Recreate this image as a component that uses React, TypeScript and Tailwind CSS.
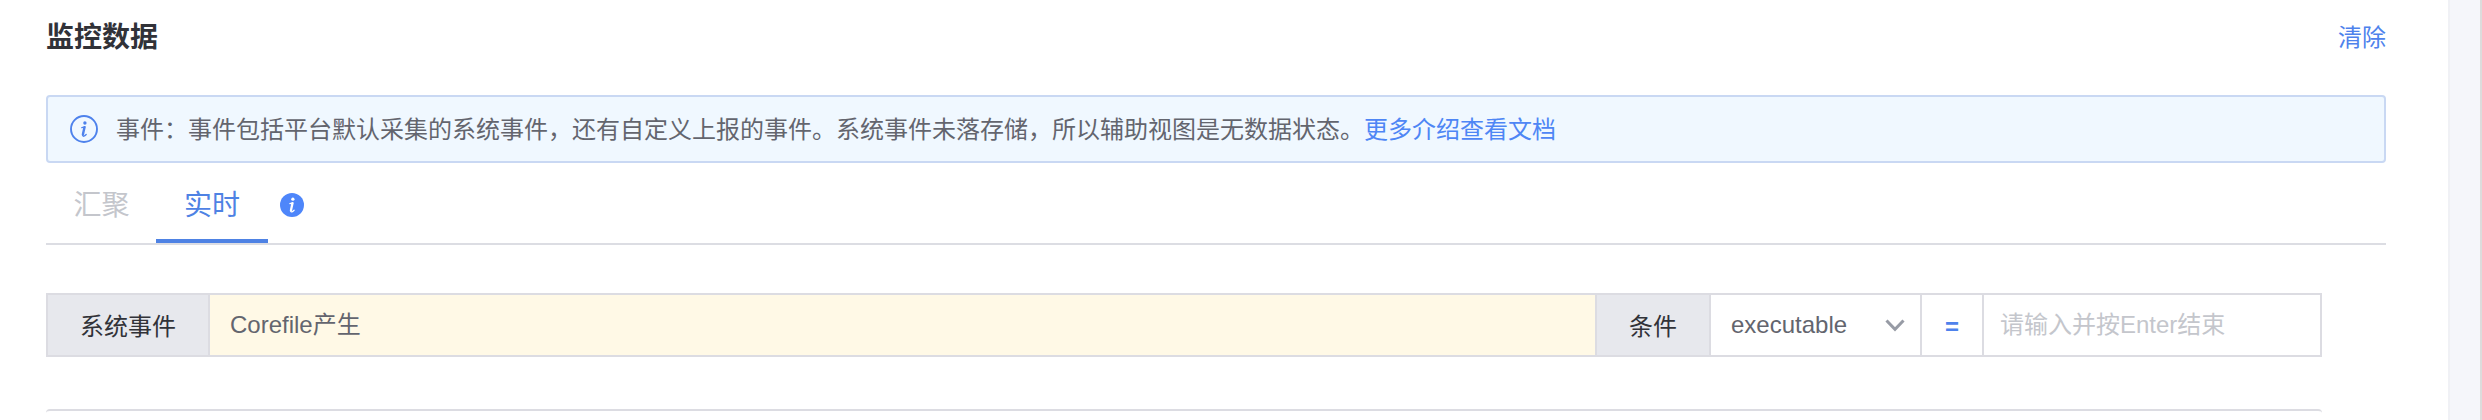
import React from "react";

function InfoMark({ color }: { color: string }) {
  return (
    <g stroke={color} fill="none" strokeLinecap="round" strokeLinejoin="round">
      <circle cx="14.9" cy="8" r="1.7" fill={color} stroke="none" />
      <path d="M11.8 12.6 L15 11.8" strokeWidth="1.3" />
      <path d="M14.5 12.2 L12.9 19.6" strokeWidth="2.4" />
      <path d="M12.7 20.4 Q13.3 22.5 16.2 19.5" strokeWidth="1.3" />
    </g>
  );
}

export default function App() {
  return (
    <div className="flex h-[420px] w-[2482px] overflow-hidden bg-white font-['Liberation_Sans','Noto_Sans_CJK_SC',sans-serif] text-[24px] leading-[36px] text-[#63656e]">
      <main className="w-[2448px] shrink-0 pl-[46px]">
        <header className="flex h-[95px] w-[2340px] items-start justify-between pt-[17px]">
          <h1 className="text-[28px] leading-[42px] font-bold text-[#313238]">监控数据</h1>
          <a className="pt-[3px] text-[#4e82ec]">清除</a>
        </header>

        <div className="flex h-[68px] w-[2340px] items-center rounded-[4px] border-2 border-[#c9d8f3] bg-[#f0f8ff] pl-[22px]">
          <svg className="size-[28px]" viewBox="0 0 28 28">
            <circle cx="14" cy="14" r="13" fill="none" stroke="#4e82ec" strokeWidth="1.9" />
            <InfoMark color="#4e82ec" />
          </svg>
          <p className="mt-px ml-[18px] whitespace-nowrap">
            事件：事件包括平台默认采集的系统事件，还有自定义上报的事件。系统事件未落存储，所以辅助视图是无数据状态。
            <a className="text-[#4e86f5]">更多介绍查看文档</a>
          </p>
        </div>

        <nav className="flex h-[82px] w-[2340px] border-b-2 border-[#dcdde3] text-[28px] leading-[42px]">
          <div className="w-[110px] pt-[22px] pl-px text-center text-[#c4c6cc]">汇聚</div>
          <div className="w-[112px] border-b-4 border-[#4e82e4] pt-[22px] text-center text-[#4e82e4]">实时</div>
          <svg className="mt-[30px] ml-[12px] size-[24px]" viewBox="1.5 1.5 25 25">
            <circle cx="14" cy="14" r="12.5" fill="#4e86fa" />
            <InfoMark color="#ffffff" />
          </svg>
        </nav>

        <div className="mt-[48px] flex h-[64px] w-[2276px] border-2 border-[#dcdce2]">
          <div className="w-[162px] border-r-2 border-[#dcdce2] bg-[#e7e8ed] pt-[14px] text-center text-[#313238]">系统事件</div>
          <div className="w-[1385px] bg-[#fff9e6] pt-[12px] pl-[20px]">Corefile产生</div>
          <div className="w-[116px] border-x-2 border-[#dcdce2] bg-[#e7e8ed] pt-[14px] text-center text-[#313238]">条件</div>
          <div className="flex w-[211px] justify-between border-r-2 border-[#dcdce2] pt-[12px] pr-[15px] pl-[20px]">
            <span>executable</span>
            <svg className="mt-[12px] h-[14px] w-[20px]" viewBox="0 0 20 14">
              <path d="M1.5 1.5 L10 10.3 L18.5 1.5" fill="none" stroke="#979ba5" strokeWidth="3" />
            </svg>
          </div>
          <div className="w-[62px] border-r-2 border-[#dcdce2] pt-[14px] text-center font-bold text-[#4e82ec]">=</div>
          <div className="pt-[12px] pl-[16px] text-[#c4c6cc]">请输入并按Enter结束</div>
        </div>

        <section className="mt-[52px] h-[80px] w-[2276px] rounded-[4px] border-t-2 border-[#dcdce2]" />
      </main>
      <aside className="w-[34px] border-r-2 border-[#dcdcdc] bg-[#f5f6fa] shadow-[inset_2px_0_0_#f0f1f5]" />
    </div>
  );
}
